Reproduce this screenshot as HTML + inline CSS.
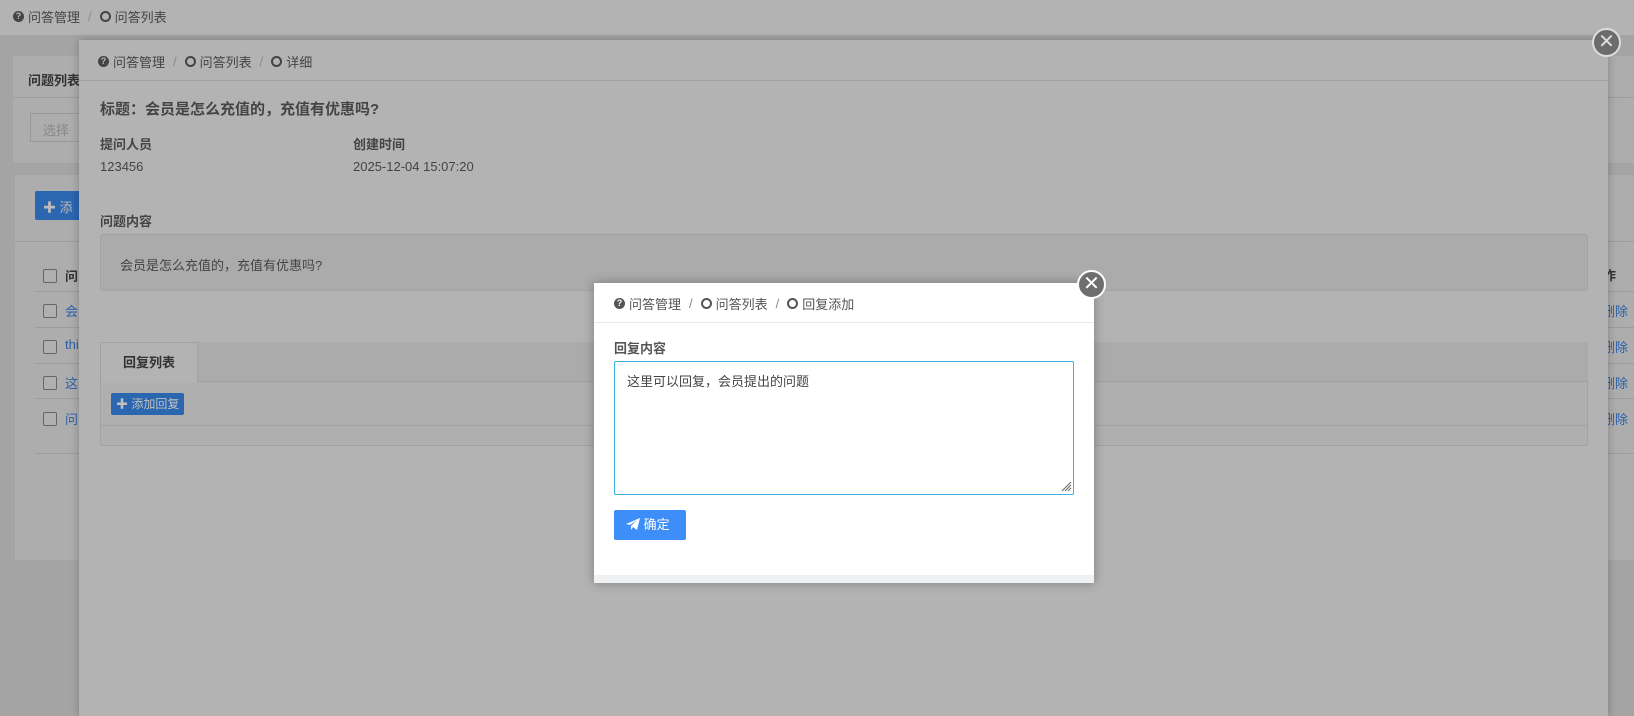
<!DOCTYPE html>
<html><head><meta charset="utf-8"><style>
*{box-sizing:border-box;margin:0;padding:0}
body{width:1634px;height:716px;overflow:hidden;background:#a4a4a4;font-family:"Liberation Sans","Noto Sans CJK SC",sans-serif;font-size:13px;color:#444;position:relative}
.abs{position:absolute}
.bc{font-size:13px;color:#444;display:flex;align-items:center;gap:4px}
.q{display:inline-block;width:11px;height:11px;border-radius:50%;background:#444;color:#bbb;font-size:9px;font-weight:bold;text-align:center;line-height:11px}
.o{display:inline-block;width:11px;height:11px;border-radius:50%;border:2px solid #444}
.sl{color:#888;margin:0 4px}
.cb{position:absolute;left:43px;width:14px;height:14px;border:1px solid #666;border-radius:2px;background:#b0b0b0}
.rowt{position:absolute;left:65px;color:#2b5ea8}
.hr{position:absolute;height:1px;background:#9c9c9c}
.del{position:absolute;left:1602px;color:#2b5ea8}
</style></head><body>
<div class="abs" style="left:0;top:0;width:1634px;height:35px;background:#b3b3b3"></div>
<div class="abs bc" style="left:13px;top:7px"><span class="q">?</span>问答管理<span class="sl">/</span><span class="o"></span>问答列表</div>
<div class="abs" style="left:13px;top:56px;width:1621px;height:107px;background:#adadad"></div>
<div class="abs" style="left:28px;top:70px;font-weight:bold;color:#333">问题列表</div>
<div class="hr" style="left:13px;top:97px;width:1621px"></div>
<div class="abs" style="left:30px;top:113px;width:60px;height:29px;border:1px solid #999;color:#888;padding:6px 12px">选择</div>
<div class="abs" style="left:15px;top:175px;width:1619px;height:385px;background:#adadad"></div>
<div class="abs" style="left:35px;top:191px;width:50px;height:29px;background:#2b66b0;border-radius:2px;color:#bbb;padding:6px 8px">✚ 添</div>
<div class="hr" style="left:15px;top:241px;width:1619px"></div>
<div class="cb" style="top:269px"></div><div class="abs" style="left:65px;top:266px;font-weight:bold;color:#333">问</div>
<div class="hr" style="left:35px;top:291px;width:1599px"></div>
<div class="cb" style="top:304px"></div><div class="rowt" style="top:301px">会</div>
<div class="hr" style="left:35px;top:327px;width:1599px"></div>
<div class="cb" style="top:340px"></div><div class="rowt" style="top:337px">thi</div>
<div class="hr" style="left:35px;top:363px;width:1599px"></div>
<div class="cb" style="top:376px"></div><div class="rowt" style="top:373px">这</div>
<div class="hr" style="left:35px;top:398px;width:1599px"></div>
<div class="cb" style="top:412px"></div><div class="rowt" style="top:409px">问</div>
<div class="hr" style="left:35px;top:453px;width:1599px"></div>
<div class="abs" style="left:1603px;top:265px;font-weight:bold;color:#333">作</div>
<div class="del" style="top:301px">删除</div><div class="del" style="top:337px">删除</div>
<div class="del" style="top:373px">删除</div><div class="del" style="top:409px">删除</div>
<div class="abs" style="left:79px;top:40px;width:1529px;height:676px;background:#b3b3b3;box-shadow:0 0 8px rgba(0,0,0,.25)"></div>
<div class="abs bc" style="left:98px;top:52px"><span class="q">?</span>问答管理<span class="sl">/</span><span class="o"></span>问答列表<span class="sl">/</span><span class="o"></span>详细</div>
<div class="hr" style="left:79px;top:80px;width:1529px;background:#a2a2a2"></div>
<div class="abs" style="left:100px;top:98px;font-size:15px;font-weight:bold;color:#444">标题：会员是怎么充值的，充值有优惠吗?</div>
<div class="abs" style="left:100px;top:134px;font-weight:bold;color:#444">提问人员</div>
<div class="abs" style="left:353px;top:134px;font-weight:bold;color:#444">创建时间</div>
<div class="abs" style="left:100px;top:159px">123456</div>
<div class="abs" style="left:353px;top:159px">2025-12-04 15:07:20</div>
<div class="abs" style="left:100px;top:211px;font-weight:bold">问题内容</div>
<div class="abs" style="left:100px;top:234px;width:1488px;height:57px;background:#ababab;border:1px solid #a2a2a2;border-radius:3px;padding:20px 19px">会员是怎么充值的，充值有优惠吗?</div>
<div class="abs" style="left:100px;top:342px;width:1488px;height:104px;border:1px solid #a2a2a2;background:#afafaf"></div>
<div class="abs" style="left:100px;top:342px;width:1488px;height:40px;background:#ababab;border-bottom:1px solid #a0a0a0"></div>
<div class="abs" style="left:100px;top:342px;width:98px;height:41px;background:#b3b3b3;border:1px solid #a2a2a2;border-bottom:none;font-weight:bold;text-align:center;line-height:40px;color:#333">回复列表</div>
<div class="abs" style="left:111px;top:393px;width:73px;height:22px;background:#2b66b0;border-radius:2px;color:#c0c0c0;font-size:12px;line-height:22px;padding-left:5px">✚ 添加回复</div>
<div class="hr" style="left:100px;top:425px;width:1488px;background:#a2a2a2"></div>
<div class="abs" style="left:1592px;top:28px;width:29px;height:29px;border-radius:50%;background:#6c6c6c;border:2px solid #ddd;color:#ddd;text-align:center;line-height:24px;font-size:20px">✕</div>
<div class="abs" style="left:594px;top:283px;width:500px;height:300px;background:#fff;box-shadow:0 0 10px rgba(0,0,0,.3)"></div>
<div class="abs bc" style="left:614px;top:294px;color:#555"><span class="q" style="background:#555;color:#fff">?</span>问答管理<span class="sl">/</span><span class="o" style="border-color:#555"></span>问答列表<span class="sl">/</span><span class="o" style="border-color:#555"></span>回复添加</div>
<div class="abs" style="left:594px;top:322px;width:500px;height:1px;background:#e6e9ec"></div>
<div class="abs" style="left:614px;top:338px;font-weight:bold;color:#555">回复内容</div>
<div class="abs" style="left:614px;top:361px;width:460px;height:134px;border:1px solid #3bb4e0;border-radius:2px;padding:9px 12px;color:#444">这里可以回复，会员提出的问题</div>
<svg class="abs" style="left:1061px;top:480px" width="11" height="12"><path d="M1 11L10 2M4 11L10 5M7 11L10 8" stroke="#666" stroke-width="1"/></svg>
<div class="abs" style="left:614px;top:510px;width:72px;height:30px;background:#3d8ef8;border-radius:2px;color:#fff;line-height:30px;padding-left:12px">
<svg width="14" height="13" viewBox="0 0 14 13" style="vertical-align:-2px"><path d="M0 6L14 0L11 12L7 9L5 12L5 8L11 2L4 7Z" fill="#fff"/></svg> 确定</div>
<div class="abs" style="left:594px;top:575px;width:500px;height:8px;background:#eff1f2"></div>
<div class="abs" style="left:1077px;top:270px;width:29px;height:29px;border-radius:50%;background:#6e6e6e;border:2px solid #fff;color:#fff;text-align:center;line-height:24px;font-size:20px">✕</div>
</body></html>
